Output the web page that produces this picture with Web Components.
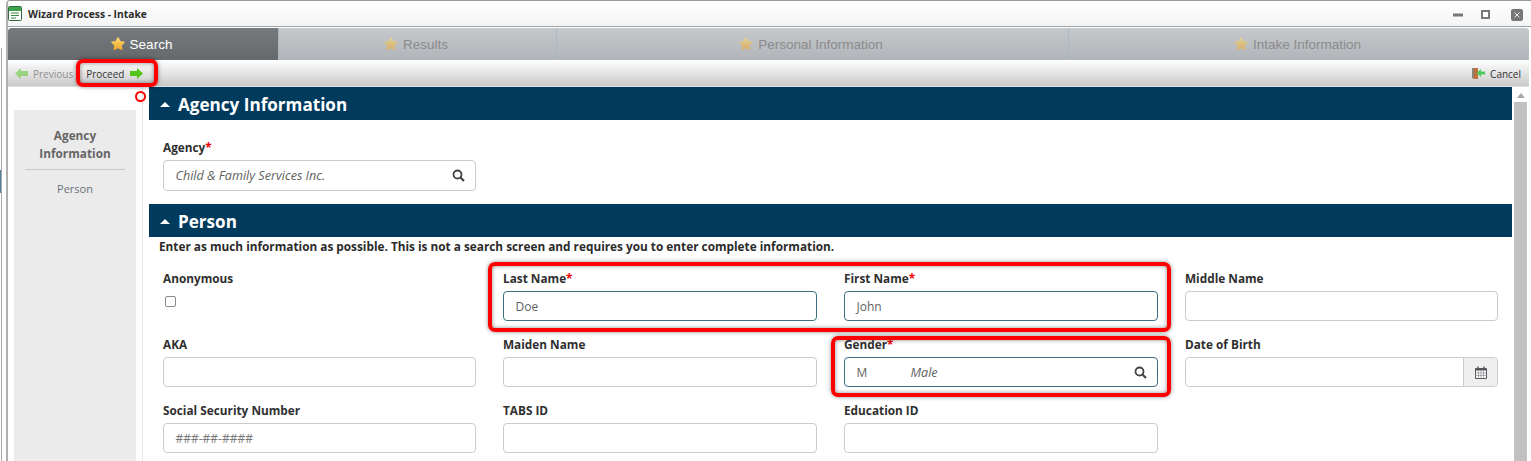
<!DOCTYPE html>
<html>
<head>
<meta charset="utf-8">
<title>Wizard Process - Intake</title>
<style>
    html, body { margin: 0; height: 461px; overflow: hidden; background: #fff; }
    body {
        font-family: "Open Sans", "Liberation Sans", sans-serif;
        background:
            linear-gradient(#4f7e9a, #4f7e9a) 0 170px / 1px 23px no-repeat,
            linear-gradient(#a9a9a9, #a9a9a9) 1px 48px / 1px 100% no-repeat,
            #fff;
    }
</style>
</head>
<body>
<wizard-window heading="Wizard Process - Intake">
    <wizard-tabs slot="tabs">
        <wizard-tab active style="width:271px">Search</wizard-tab>
        <wizard-tab style="width:278px">Results</wizard-tab>
        <wizard-tab style="width:512px">Personal Information</wizard-tab>
        <wizard-tab style="flex:1">Intake Information</wizard-tab>
    </wizard-tabs>
    <wizard-toolbar slot="toolbar"></wizard-toolbar>
    <side-nav slot="nav"></side-nav>

    <form-section heading="Agency Information" compact>
        <form-grid>
            <form-field label="Agency" required value="Child &amp; Family Services Inc." italic search tall></form-field>
        </form-grid>
    </form-section>
    <form-section heading="Person" note="Enter as much information as possible. This is not a search screen and requires you to enter complete information.">
        <form-grid>
            <form-field label="Anonymous" check></form-field>
            <form-field label="Last Name" required value="Doe" focus></form-field>
            <form-field label="First Name" required value="John" focus></form-field>
            <form-field label="Middle Name"></form-field>
            <form-field label="AKA"></form-field>
            <form-field label="Maiden Name"></form-field>
            <form-field label="Gender" required code="M" value="Male" italic search focus></form-field>
            <form-field label="Date of Birth" calendar></form-field>
            <form-field label="Social Security Number" value="###-##-####" placeholder></form-field>
            <form-field label="TABS ID"></form-field>
            <form-field label="Education ID"></form-field>
        </form-grid>
    </form-section>
</wizard-window>

<red-mark style="left:76px;top:59px;width:82px;height:28px"></red-mark>
<red-mark style="left:488px;top:262px;width:683px;height:70px"></red-mark>
<red-mark style="left:831px;top:336px;width:340px;height:61px"></red-mark>
<red-mark dot style="left:135px;top:91px;width:11px;height:11px"></red-mark>

<script>
const STAR = `<svg width="16" height="16" viewBox="0 0 16 16"><defs><linearGradient id="g" x1="0" y1="0" x2="0" y2="1"><stop offset="0" stop-color="#ffdc6e"/><stop offset="1" stop-color="#f0a630"/></linearGradient></defs><path d="M8 2l1.9 3.7 4.1.6-3 2.9.7 4.1L8 11.4l-3.7 1.9.7-4.1-3-2.9 4.1-.6z" fill="url(#g)" stroke="url(#g)" stroke-width="1.5" stroke-linejoin="round"/></svg>`;

class WizardWindow extends HTMLElement {
    constructor() {
        super();
        this.attachShadow({ mode: 'open' });
        this.shadowRoot.innerHTML = /* html */`
            <style>
                :host {
                    display: block;
                    height: 461px;
                    margin-left: 6px;
                    background: #fff;
                    border-top: 1px solid #9a9a9a;
                    border-left: 2px solid #b0b0b0;
                    box-sizing: border-box;
                    overflow: hidden;
                    border-top-left-radius: 4px;
                }
                .title {
                    display: flex;
                    align-items: center;
                    height: 25px;
                    padding: 0 8px 0 0;
                    background: linear-gradient(#fff, #f4f4f4);
                    border-bottom: 1px solid #a0a0a0;
                    font-size: 10.25px;
                    font-weight: 700;
                    color: #2b2b2b;
                }
                .title svg.logo { margin-right: 6px; }
                .title span { flex: 1; }
                .buttons { display: flex; align-items: center; padding-top: 2px; }
                .buttons svg + svg { margin-left: 18px; }
                .buttons svg:last-child { margin-left: 21px; }
                .body { padding: 1px 2px 0 0; }
                .main { display: flex; height: 374px; overflow: hidden; }
                .nav { width: 134px; flex: none; border-right: 1px solid #e6e6e6; }
                .content { flex: 1; padding-left: 6px; min-width: 0; }
                .scroll {
                    width: 13px; flex: none; margin: 0 2px;
                    display: flex; flex-direction: column; align-items: center;
                }
                .scroll i {
                    width: 0; height: 0; margin: 6px 0 4px;
                    border: 4px solid transparent; border-top: 0; border-bottom: 5px solid #a8a8a8;
                }
                .scroll b { flex: 1; width: 100%; background: #c1c1c1; }
            </style>
            <div class="title">
                <svg class="logo" width="14" height="15" viewBox="0 0 14 15">
                    <rect x=".5" y=".5" width="13" height="14" rx="1" fill="#fff" stroke="#2f6b3a"/>
                    <rect x="1" y="1" width="12" height="4" fill="#3fa34d"/>
                    <path d="M3 7h8M3 9.5h8M3 12h5" stroke="#3a8a48" stroke-width="1.2"/>
                </svg>
                <span id="heading"></span>
                <div class="buttons">
                    <svg width="10" height="4" viewBox="0 0 10 4"><rect width="10" height="3" y=".5" fill="#777"/></svg>
                    <svg width="9" height="9" viewBox="0 0 9 9"><rect x="1" y="1" width="7" height="7" fill="#fff" stroke="#777" stroke-width="2"/></svg>
                    <svg width="12" height="12" viewBox="0 0 12 12"><rect width="12" height="12" rx="2" fill="#777"/><path d="M3.5 3.5l5 5M8.5 3.5l-5 5" stroke="#eee"/></svg>
                </div>
            </div>
            <div class="body">
                <slot name="tabs"></slot>
                <slot name="toolbar"></slot>
                <div class="main">
                    <div class="nav"><slot name="nav"></slot></div>
                    <div class="content"><slot></slot></div>
                    <div class="scroll"><i></i><b></b></div>
                </div>
            </div>
        `;
        this.shadowRoot.getElementById('heading').textContent = this.getAttribute('heading');
    }
}

class WizardTabs extends HTMLElement {
    constructor() {
        super();
        this.attachShadow({ mode: 'open' });
        this.shadowRoot.innerHTML = /* html */`
            <style>
                :host {
                    display: flex;
                    height: 32px;
                    border-radius: 4px 4px 0 0;
                    overflow: hidden;
                    background: linear-gradient(#c6c9cc, #b1b4b8);
                }
            </style>
            <slot></slot>
        `;
    }
}

class WizardTab extends HTMLElement {
    constructor() {
        super();
        this.attachShadow({ mode: 'open' });
        this.shadowRoot.innerHTML = /* html */`
            <style>
                :host {
                    display: flex;
                    align-items: center;
                    justify-content: center;
                    gap: 4px;
                    box-sizing: border-box;
                    padding-right: 4px;
                    border-right: 1px solid #a9b9bf;
                    font: 13.5px "Liberation Sans", Arial, sans-serif;
                    color: #8b8b8d;
                    background: linear-gradient(#c6c9cc, #b1b4b8);
                }
                :host(:last-child) { border-right: 0; }
                :host([active]) { color: #fff; background: linear-gradient(#777a7d, #66696c); }
                svg { opacity: .55; }
                :host([active]) svg { opacity: 1; }
            </style>
            ${STAR}<slot></slot>
        `;
    }
}

class WizardToolbar extends HTMLElement {
    constructor() {
        super();
        this.attachShadow({ mode: 'open' });
        this.shadowRoot.innerHTML = /* html */`
            <style>
                :host {
                    display: flex;
                    align-items: center;
                    height: 27px;
                    padding: 1px 8px 0 7px;
                    box-sizing: border-box;
                    background: linear-gradient(#fff, #cacaca);
                    border-bottom: 1px solid #e0e0e0;
                    font-size: 10px;
                    color: #333;
                }
                .btn { display: flex; align-items: center; gap: 6px; }
                .prev { color: #8f8f8f; margin-right: 13px; gap: 5px; }
                .prev svg { opacity: .5; }
                .cancel { margin-left: auto; gap: 5px; }
            </style>
            <div class="btn prev">
                <svg width="13" height="11" viewBox="0 0 13 11"><path d="M0 5.5L6 0v3h7v5H6v3z" fill="#52c41a"/></svg>
                Previous
            </div>
            <div class="btn">
                Proceed
                <svg width="13" height="11" viewBox="0 0 13 11"><path d="M13 5.5L7 0v3H0v5h7v3z" fill="#52c41a"/></svg>
            </div>
            <div class="btn cancel">
                <svg width="14" height="13" viewBox="0 0 14 13">
                    <path d="M1 1h6v11H3l-2-1z" fill="#c0703a"/>
                    <path d="M1 1h2v10H1z" fill="#8d8478"/>
                    <path d="M14 4.5H10V2L5.5 6l4.5 4V7.5h4z" fill="#4ecb5a"/>
                </svg>
                Cancel
            </div>
        `;
    }
}

class SideNav extends HTMLElement {
    constructor() {
        super();
        this.attachShadow({ mode: 'open' });
        this.shadowRoot.innerHTML = /* html */`
            <style>
                :host {
                    display: block;
                    box-sizing: border-box;
                    margin: 23px 6px 0 6px;
                    height: 351px;
                    background: #ebebeb;
                    padding: 16px 11px 0;
                    text-align: center;
                    font-size: 11px;
                    line-height: 18px;
                    color: #68727a;
                }
                .on { font-size: 11.8px; font-weight: 700; color: #666; padding-bottom: 7px; border-bottom: 1px solid #c9c9c9; }
                .item { margin-top: 10px; }
            </style>
            <div class="on">Agency<br>Information</div>
            <div class="item">Person</div>
        `;
    }
}

class FormSection extends HTMLElement {
    constructor() {
        super();
        this.attachShadow({ mode: 'open' });
        const note = this.getAttribute('note');
        this.shadowRoot.innerHTML = /* html */`
            <style>
                :host { display: block; padding-right: 0; }
                header {
                    display: flex;
                    align-items: center;
                    gap: 8px;
                    box-sizing: border-box;
                    height: 33px;
                    padding: 2px 0 0 11px;
                    background: #003a5d;
                    color: #fff;
                    font-size: 17.1px;
                    font-weight: 700;
                }
                header i {
                    width: 0; height: 0;
                    border: 5.5px solid transparent; border-top: 0; border-bottom: 5px solid #fff;
                }
                .note {
                    height: 18px;
                    line-height: 18px;
                    padding-left: 10px;
                    font-size: 11.8px;
                    font-weight: 700;
                    color: #2b2b2b;
                }
                .inner { padding: 14px 14px 0; }
                :host([compact]) .inner { padding-top: 18px; padding-bottom: 13px; }
            </style>
            <header><i></i><span id="h"></span></header>
            ${note ? `<div class="note" id="n"></div>` : ''}
            <div class="inner"><slot></slot></div>
        `;
        this.shadowRoot.getElementById('h').textContent = this.getAttribute('heading');
        if (note) this.shadowRoot.getElementById('n').textContent = note;
    }
}

class FormGrid extends HTMLElement {
    constructor() {
        super();
        this.attachShadow({ mode: 'open' });
        this.shadowRoot.innerHTML = /* html */`
            <style>
                :host {
                    display: grid;
                    grid-template-columns: 313px 314px 314px 313px;
                    column-gap: 27px;
                    row-gap: 14px;
                }
            </style>
            <slot></slot>
        `;
    }
}

class FormField extends HTMLElement {
    constructor() {
        super();
        this.attachShadow({ mode: 'open' });
        this.shadowRoot.innerHTML = /* html */`
            <style>
                :host { display: block; }
                label {
                    display: block;
                    height: 18px;
                    line-height: 18px;
                    margin-bottom: 4px;
                    font-size: 11.8px;
                    font-weight: 700;
                    color: #2f2f2f;
                }
                label em { color: #e00; font-style: normal; }
                .box {
                    display: flex;
                    align-items: center;
                    box-sizing: border-box;
                    height: 30px;
                    padding-left: 11.5px;
                    border: 1px solid #ccc;
                    border-radius: 4px;
                    font-size: 12px;
                    color: #5f5f5f;
                    overflow: hidden;
                }
                :host([tall]) .box { height: 31px; }
                :host([focus]) .box { border-color: #3f6f85; }
                .code { width: 54px; }
                :host([italic]) .val { font-style: italic; font-size: 12.6px; }
                :host([placeholder]) .val { color: #777; }
                .search { margin-left: auto; margin-right: 10px; display: flex; }
                .cal {
                    margin-left: auto; width: 34px; height: 100%;
                    box-sizing: border-box; padding-left: 1px;
                    display: flex; align-items: center; justify-content: center;
                    background: #eee; border-left: 1px solid #ccc;
                }
                .chk {
                    display: block; width: 9px; height: 9px; margin: 9px 0 0 2px;
                    border: 1px solid #8a8a8a; border-radius: 2px; background: #fff;
                }
            </style>
            <label id="l"></label>
            <div id="c"></div>
        `;
        const s = this.shadowRoot;
        const label = s.getElementById('l');
        label.textContent = this.getAttribute('label');
        if (this.hasAttribute('required')) label.insertAdjacentHTML('beforeend', '<em>*</em>');

        const holder = s.getElementById('c');
        if (this.hasAttribute('check')) {
            holder.innerHTML = '<span class="chk"></span>';
            return;
        }
        const box = document.createElement('div');
        box.className = 'box';
        if (this.hasAttribute('code')) {
            const code = document.createElement('span');
            code.className = 'code';
            code.textContent = this.getAttribute('code');
            box.append(code);
        }
        if (this.hasAttribute('value')) {
            const val = document.createElement('span');
            val.className = 'val';
            val.textContent = this.getAttribute('value');
            box.append(val);
        }
        if (this.hasAttribute('search')) {
            box.insertAdjacentHTML('beforeend', `<span class="search"><svg width="13" height="13" viewBox="0 0 13 13"><circle cx="5.5" cy="5.5" r="4" fill="none" stroke="#444" stroke-width="1.8"/><path d="M8.5 8.5l3.5 3.5" stroke="#444" stroke-width="2.2"/></svg></span>`);
        }
        if (this.hasAttribute('calendar')) {
            box.style.paddingLeft = '0';
            box.insertAdjacentHTML('beforeend', `<span class="cal"><svg width="12" height="13" viewBox="0 0 12 13"><path d="M.5 2.5h11v10H.5z" fill="#fff" stroke="#555"/><path d="M.5 3h11v1.5H.5z" fill="#555"/><path d="M3 .5v3M9 .5v3" stroke="#555" stroke-width="1.4"/><path d="M.5 7h11M.5 9.5h11M3.5 4.5v8M6 4.5v8M8.5 4.5v8" stroke="#8c8c96" stroke-width=".7"/></svg></span>`);
        }
        holder.append(box);
    }
}

class RedMark extends HTMLElement {
    constructor() {
        super();
        this.attachShadow({ mode: 'open' });
        this.shadowRoot.innerHTML = /* html */`
            <style>
                :host {
                    position: absolute;
                    box-sizing: border-box;
                    border: 4px solid #f00;
                    border-radius: 7px;
                    box-shadow: 0 0 4px rgba(0,0,0,.45), inset 0 0 4px rgba(0,0,0,.45);
                }
                :host([dot]) { border-width: 2px; border-radius: 50%; box-shadow: none; }
            </style>
        `;
    }
}

window.customElements.define("wizard-window", WizardWindow);
window.customElements.define("wizard-tabs", WizardTabs);
window.customElements.define("wizard-tab", WizardTab);
window.customElements.define("wizard-toolbar", WizardToolbar);
window.customElements.define("side-nav", SideNav);
window.customElements.define("form-section", FormSection);
window.customElements.define("form-grid", FormGrid);
window.customElements.define("form-field", FormField);
window.customElements.define("red-mark", RedMark);
</script>
</body>
</html>
